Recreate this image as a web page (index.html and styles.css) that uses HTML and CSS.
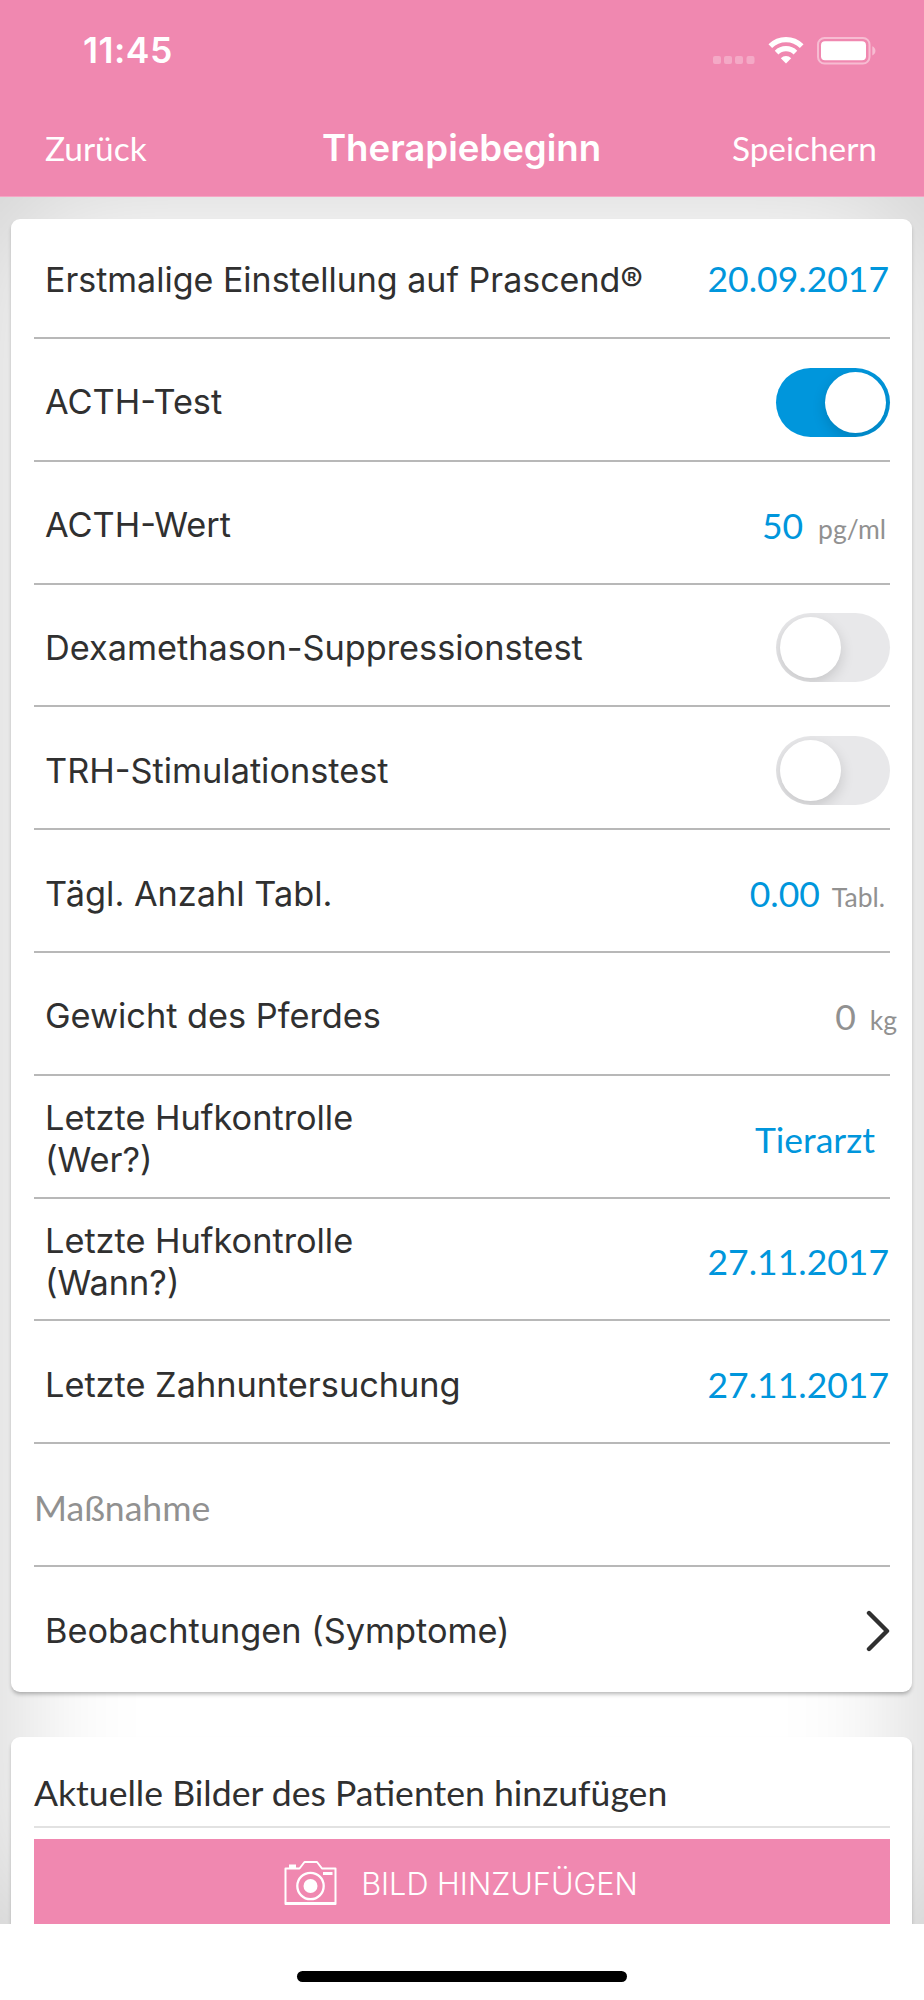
FILE: index.html
```html
<!DOCTYPE html>
<html lang="de">
<head>
    <meta charset="UTF-8">
    <meta name="viewport" content="width=device-width, initial-scale=1.0">
    <title>Therapiebeginn</title>
    <link rel="stylesheet" href="styles.css">
</head>
<body>
    <header>
        <div class="statusbar">
            <span class="time">11:45</span>
            <div class="status-icons">
                <svg class="dots" width="42" height="8" viewBox="0 0 42 8" fill="#f4a9c6">
                    <rect x="0" y="0" width="8" height="8" rx="2"/>
                    <rect x="11" y="0" width="8" height="8" rx="2"/>
                    <rect x="22" y="0" width="8" height="8" rx="2"/>
                    <rect x="33.5" y="0" width="8" height="8" rx="2"/>
                </svg>
                <svg class="wifi" width="36" height="27" viewBox="0 0 36 27" fill="none" stroke="#fff" stroke-width="5.2">
                    <path d="M2.3 9.2a22.2 22.2 0 0 1 31.4 0"/>
                    <path d="M8.6 15.6a13.3 13.3 0 0 1 18.8 0"/>
                    <path d="M18 26.5l-5.2-5.3a7.4 7.4 0 0 1 10.4 0z" fill="#fff" stroke="none"/>
                </svg>
                <svg class="battery" width="60" height="28" viewBox="0 0 60 28">
                    <rect x="1" y="1" width="51.5" height="25.5" rx="6.5" fill="none" stroke="#f7bcd2" stroke-width="2"/>
                    <rect x="4" y="4.3" width="45" height="19" rx="4" fill="#fff"/>
                    <path d="M55.3 9.3c4.2 1.8 4.2 7.4 0 9.2z" fill="#f7bcd2"/>
                </svg>
            </div>
        </div>
        <nav>
            <a class="back">Zurück</a>
            <h1>Therapiebeginn</h1>
            <a class="save">Speichern</a>
        </nav>
    </header>
    <main>
        <section class="card">
            <div class="row first">
                <span class="label">Erstmalige Einstellung auf Prascend®</span>
                <span class="value">20.09.2017</span>
            </div>
            <div class="row">
                <span class="label">ACTH-Test</span>
                <span class="switch on"></span>
            </div>
            <div class="row">
                <span class="label">ACTH-Wert</span>
                <span class="measure acth"><span class="value">50</span><span class="unit">pg/ml</span></span>
            </div>
            <div class="row">
                <span class="label">Dexamethason-Suppressionstest</span>
                <span class="switch"></span>
            </div>
            <div class="row">
                <span class="label">TRH-Stimulationstest</span>
                <span class="switch"></span>
            </div>
            <div class="row">
                <span class="label">Tägl. Anzahl Tabl.</span>
                <span class="measure tablets"><span class="value">0.00</span><span class="unit">Tabl.</span></span>
            </div>
            <div class="row">
                <span class="label">Gewicht des Pferdes</span>
                <span class="measure weight"><span class="value empty">0</span><span class="unit">kg</span></span>
            </div>
            <div class="row">
                <span class="label">Letzte Hufkontrolle<br>(Wer?)</span>
                <span class="value select">Tierarzt</span>
            </div>
            <div class="row">
                <span class="label">Letzte Hufkontrolle<br>(Wann?)</span>
                <span class="value">27.11.2017</span>
            </div>
            <div class="row">
                <span class="label">Letzte Zahnuntersuchung</span>
                <span class="value">27.11.2017</span>
            </div>
            <div class="row">
                <span class="placeholder">Maßnahme</span>
            </div>
            <div class="row last">
                <span class="label">Beobachtungen (Symptome)</span>
                <svg class="chevron" width="24" height="42" viewBox="0 0 24 42" fill="none" stroke="#303030" stroke-width="4.4" stroke-linecap="round" stroke-linejoin="round">
                    <path d="M3 3l18 18L3 39"/>
                </svg>
            </div>
        </section>
        <section class="card pictures">
            <h2>Aktuelle Bilder des Patienten hinzufügen</h2>
            <button type="button">
                <svg class="camera" width="53" height="46" viewBox="0 0 53 46" fill="none" stroke="#fff" stroke-width="2">
                    <path d="M1.5 8.5H15.5L20.5 2H33L38 8.5H51.5V44H1.5z" stroke-linejoin="round"/>
                    <path d="M1.5 43H51.5"/>
                    <path d="M5 4.5H12V8H5zM39 12h9.5v3H39z" fill="#fff" stroke="none"/>
                    <circle cx="26.5" cy="26" r="13.2" stroke-width="2.3"/>
                    <circle cx="26.5" cy="26" r="7" fill="#fff" stroke="none"/>
                </svg>
                <span>BILD HINZUFÜGEN</span>
            </button>
        </section>
    </main>
    <footer>
        <div class="home-indicator"></div>
    </footer>
</body>
</html>
```
FILE: styles.css
```css
* {
    box-sizing: border-box;
}
body {
    margin: 0;
    height: 2000px;
    overflow: hidden;
    display: flex;
    flex-direction: column;
    font-family: Inter, "Liberation Sans", sans-serif;
    color: #303030;
    background-color: #fff;
}
header {
    flex: none;
    height: 197px;
    color: #fff;
    background-color: #f088b0;
    border-bottom: 1px solid #f5a5c4;
}
.statusbar {
    height: 101px;
    padding: 0 47px 0 83px;
    display: flex;
    align-items: center;
    justify-content: space-between;
}
.time {
    font-size: 35.5px;
    font-weight: 600;
    letter-spacing: 0.5px;
}
.status-icons {
    display: flex;
    align-items: center;
}
.dots {
    margin: 18px 13px 0 0;
}
.wifi {
    margin-right: 13px;
}
nav {
    height: 93px;
    padding: 0 47px 0 45px;
    display: grid;
    grid-template-columns: 1fr auto 1fr;
    align-items: center;
}
nav a {
    font-family: Lato, sans-serif;
    font-size: 33.4px;
}
.save {
    text-align: right;
}
h1 {
    margin: 0;
    padding-left: 1px;
    font-size: 36.6px;
    font-weight: 600;
}
main {
    flex: none;
    height: 1727px;
    padding: 22px 12px 0 11px;
    overflow: hidden;
    background-color: #fff;
    box-shadow: inset 0 0 140px rgba(0, 0, 0, 0.2);
}
.card {
    padding: 0 22px 0 23px;
    border-radius: 9px;
    background-color: #fff;
    box-shadow: 0 3px 4px -1px rgba(0, 0, 0, 0.3);
}
.row {
    height: 122.8px;
    padding: 6px 0 0 11px;
    display: flex;
    align-items: center;
    justify-content: space-between;
    border-bottom: 2px solid #b8b8b8;
}
.row.first {
    height: 120px;
    padding-top: 3px;
}
.row.first .label {
    font-size: 34px;
}
.row.first .value {
    margin-top: -3px;
}
.row.last {
    height: 125px;
    padding-top: 3px;
    border-bottom: none;
}
.label {
    font-size: 34.3px;
    line-height: 42px;
}
.value {
    margin-right: 1px;
    font-family: Lato, sans-serif;
    font-size: 35.5px;
    color: #0096dc;
}
.value.empty {
    color: #919191;
}
.value.select {
    margin-right: 15px;
}
.measure {
    display: flex;
    align-items: baseline;
}
.unit {
    margin-left: 14px;
    font-family: Lato, sans-serif;
    font-size: 26.5px;
    color: #919191;
}
.acth {
    margin-right: 4px;
}
.tablets {
    margin-right: 5px;
}
.tablets .unit {
    margin-left: 11px;
}
.weight {
    margin-right: -7px;
}
.weight .unit {
    margin-left: 13px;
}
.switch {
    width: 114px;
    height: 69px;
    padding: 4px;
    display: flex;
    border-radius: 35px;
    background-color: #e8e8ea;
    overflow: hidden;
}
.switch::before {
    content: "";
    width: 61px;
    height: 61px;
    border-radius: 50%;
    background-color: #fff;
    box-shadow: 0 5px 14px rgba(0, 0, 0, 0.15);
}
.switch.on {
    justify-content: flex-end;
    background-color: #0096dc;
}
.placeholder {
    margin-left: -11px;
    font-family: Lato, sans-serif;
    font-size: 35.6px;
    color: #919191;
}
.pictures {
    height: 240px;
    margin-top: 45px;
    padding-top: 23px;
}
h2 {
    height: 68px;
    margin: 0 0 11px;
    font-family: Lato, sans-serif;
    font-size: 35.6px;
    font-weight: 400;
    line-height: 66px;
    border-bottom: 2px solid #e2e2e2;
}
button {
    width: 100%;
    height: 92px;
    padding: 0 2px 3px 0;
    display: flex;
    align-items: center;
    justify-content: center;
    gap: 24px;
    border: none;
    font-family: Inter, sans-serif;
    font-size: 30.7px;
    font-weight: 300;
    color: #fff;
    background-color: #f088b0;
}
footer {
    padding-top: 47px;
}
.home-indicator {
    width: 330px;
    height: 11px;
    margin: 0 auto;
    border-radius: 6px;
    background-color: #000;
}
```
